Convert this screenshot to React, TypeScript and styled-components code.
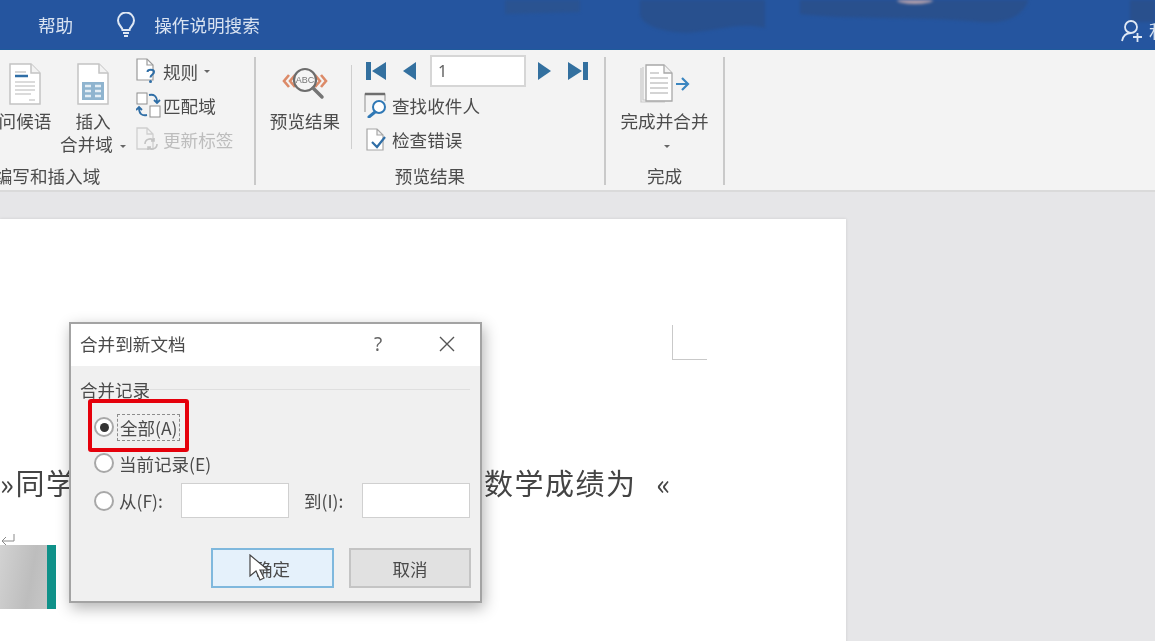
import React from 'react';
import styled, { createGlobalStyle } from 'styled-components';

const GlobalStyle = createGlobalStyle`
    html, body {
        margin: 0;
        padding: 0;
        background: #e6e6e8;
    }
    body {
        font-family: "Noto Sans CJK SC", "Noto Sans", sans-serif;
    }
`;

const Screen = styled.div`
    position: relative;
    width: 1155px;
    height: 641px;
    overflow: hidden;
    display: flex;
    flex-direction: column;
    filter: blur(0.45px);
`;

/* title bar */
const TitleBar = styled.div`
    position: relative;
    flex: none;
    height: 50px;
    box-sizing: border-box;
    padding-left: 38px;
    display: flex;
    align-items: center;
    background: #25559f;
    border-bottom: 1px solid #1f5a9c;
    color: #d9e3f1;
    font-size: 17.6px;
    overflow: hidden;
`;
const TitleArt = styled.svg`
    position: absolute;
    left: 480px;
    top: 0;
    filter: blur(1.5px);
`;
const HelpTab = styled.span`
    position: relative;
    line-height: 24px;
`;
const SearchHint = styled.div`
    position: relative;
    margin-left: 43px;
    display: flex;
    align-items: center;
    gap: 18px;
    line-height: 24px;
`;
const Account = styled.div`
    position: absolute;
    left: 1121px;
    top: 19px;
    display: flex;
    gap: 6px;
    font-size: 18px;
    line-height: 22px;
`;

/* ribbon */
const Ribbon = styled.div`
    flex: none;
    height: 142px;
    box-sizing: border-box;
    padding: 7px 0 5px;
    display: flex;
    background: #f3f3f3;
    border-bottom: 2px solid #dadada;
    color: #4c4c4c;
    font-size: 17.6px;
`;
const Group = styled.div<{ $width: number; $offset?: number }>`
    flex: none;
    box-sizing: border-box;
    width: ${p => p.$width}px;
    margin-left: ${p => p.$offset ?? 0}px;
    display: flex;
    flex-direction: column;
    border-right: 2px solid #c9c9c9;
`;
const GroupBody = styled.div<{ $end?: boolean; $pad?: number }>`
    flex: 1;
    display: flex;
    justify-content: ${p => (p.$end ? 'flex-end' : 'flex-start')};
    padding: 0 ${p => (p.$end ? p.$pad ?? 0 : 0)}px 0 ${p => (p.$end ? 0 : p.$pad ?? 0)}px;
`;
const GroupLabel = styled.div`
    flex: none;
    text-align: center;
    line-height: 18px;
    height: 18px;
`;
const LargeButton = styled.div<{ $width: number }>`
    flex: none;
    box-sizing: border-box;
    width: ${p => p.$width}px;
    padding-top: 6px;
    display: flex;
    flex-direction: column;
    align-items: center;
    text-align: center;
`;
const LargeIconSlot = styled.div`
    height: 42px;
    display: flex;
    align-items: center;
    justify-content: center;
`;
const LargeLabel = styled.div`
    margin-top: 4px;
    line-height: 23px;
    white-space: nowrap;
`;
const Caret = styled.span<{ $gap?: number }>`
    display: inline-block;
    width: 0;
    height: 0;
    margin-left: ${p => p.$gap ?? 5}px;
    vertical-align: middle;
    border-left: 3px solid transparent;
    border-right: 3px solid transparent;
    border-top: 3px solid #666;
`;
const Stack = styled.div<{ $width: number; $left?: number }>`
    flex: none;
    width: ${p => p.$width}px;
    margin-top: -1px;
    margin-left: ${p => p.$left ?? 0}px;
    display: flex;
    flex-direction: column;
    gap: 4px;
`;
const StackRow = styled.div<{ $disabled?: boolean }>`
    height: 30px;
    display: flex;
    align-items: center;
    gap: 1px;
    white-space: nowrap;
    color: ${p => (p.$disabled ? '#bdbdbd' : 'inherit')};
`;
const RowIcon = styled.span<{ $width: number }>`
    flex: none;
    width: ${p => p.$width}px;
    display: flex;
    align-items: center;
`;
const InnerSeparator = styled.div`
    flex: none;
    width: 1px;
    height: 84px;
    margin: 8px 0 0 10px;
    background: #cfcfcf;
`;
const RecordRow = styled.div`
    height: 30px;
    padding-left: 2px;
    display: flex;
    align-items: center;
`;
const NavSpacer = styled.span`
    flex: none;
    width: 16px;
`;
const RecordInput = styled.div`
    box-sizing: border-box;
    width: 96px;
    height: 32px;
    margin: 0 12px 0 14px;
    padding-left: 6px;
    background: #fff;
    border: 2px solid #d6d6d6;
    color: #606060;
    line-height: 28px;
    font-family: "Noto Sans", sans-serif;
    font-size: 16px;
`;

/* document area */
const Workspace = styled.div`
    flex: 1;
    min-height: 0;
    padding-top: 27px;
    background: #e6e6e8;
`;
const Page = styled.div`
    position: relative;
    box-sizing: border-box;
    width: 846px;
    height: 440px;
    padding-top: 106px;
    background: #fff;
    box-shadow: 0 0 3px rgba(0, 0, 0, 0.12);
`;
const CropMark = styled.div`
    box-sizing: border-box;
    width: 35px;
    height: 35px;
    margin-left: 672px;
    border-left: 1px solid #c9c9c9;
    border-bottom: 1px solid #c9c9c9;
`;
const DocLine = styled.div`
    width: 672px;
    margin-top: 102px;
    display: flex;
    justify-content: space-between;
    color: #444;
    font-size: 29px;
    line-height: 40px;
    letter-spacing: 1.5px;
    white-space: nowrap;
`;
const FieldQuote = styled.span`
    margin-left: 20px;
`;
const DocPicture = styled.div`
    position: relative;
    width: 56px;
    height: 64px;
    margin-top: 43px;
    display: flex;
    justify-content: flex-end;
    background: linear-gradient(100deg, #d2d2d2, #bdbdbd 55%, #cbcbcb);
`;
const PictureEdge = styled.div`
    width: 9px;
    background: #0f9189;
`;
const ReturnMark = styled.svg`
    position: absolute;
    left: 0;
    top: -12px;
`;

/* dialog */
const Dialog = styled.div`
    position: absolute;
    left: 69px;
    top: 103px;
    box-sizing: border-box;
    width: 413px;
    height: 281px;
    display: flex;
    flex-direction: column;
    background: #f0f0f0;
    border: 2px solid #a3a3a3;
    box-shadow: 2px 5px 14px rgba(0, 0, 0, 0.3);
    color: #4a4a4a;
    font-size: 17.5px;
`;
const DialogHeader = styled.div`
    flex: none;
    box-sizing: border-box;
    height: 42px;
    padding: 0 0 2px 9px;
    display: flex;
    align-items: center;
    background: #fff;
    line-height: 24px;
`;
const DialogTitle = styled.div`
    flex: 1;
    font-size: 17.6px;
`;
const HelpMark = styled.span`
    width: 20px;
    margin-right: 51px;
    text-align: center;
    color: #666;
    font-family: "Noto Sans", sans-serif;
    font-size: 19px;
`;
const CloseMark = styled.svg`
    margin-right: 25px;
`;
const DialogBody = styled.div`
    flex: 1;
    padding: 14px 10px 0 9px;
`;
const Legend = styled.div`
    height: 20px;
    margin-bottom: 1px;
    display: flex;
    align-items: center;
    line-height: 20px;
    white-space: nowrap;
    &::after {
        content: '';
        flex: 1;
        height: 1px;
        margin: 0 0 2px 0;
        background: #dfdfdf;
    }
`;
const RadioRow = styled.div<{ $height: number; $top: number }>`
    position: relative;
    height: ${p => p.$height}px;
    margin-top: ${p => p.$top}px;
    padding-left: 14px;
    display: flex;
    align-items: center;
    white-space: nowrap;
`;
const Radio = styled.span<{ $checked?: boolean }>`
    flex: none;
    box-sizing: border-box;
    width: 20px;
    height: 20px;
    margin-right: 5px;
    display: flex;
    align-items: center;
    justify-content: center;
    border: 2px solid #a8a8a8;
    border-radius: 50%;
    background: #fff;
    &::after {
        content: '';
        width: 9px;
        height: 9px;
        border-radius: 50%;
        background: ${p => (p.$checked ? '#333' : 'transparent')};
    }
`;
const FocusLabel = styled.span`
    margin-left: -2px;
    padding: 0 2px;
    line-height: 25px;
    border: 1px dashed #8c8c8c;
`;
const Highlight = styled.div`
    position: absolute;
    left: 8px;
    top: -14px;
    box-sizing: border-box;
    width: 101px;
    height: 53px;
    border: 4px solid #e5000b;
    border-radius: 3px;
`;
const FieldLabel = styled.span<{ $width: number; $left?: number }>`
    flex: none;
    width: ${p => p.$width}px;
    margin-left: ${p => p.$left ?? 0}px;
`;
const FieldInput = styled.div`
    box-sizing: border-box;
    flex: none;
    width: 108px;
    height: 35px;
    background: #fff;
    border: 1px solid #d0d0d0;
`;
const DialogActions = styled.div`
    margin-top: 30px;
    margin-right: -1px;
    display: flex;
    justify-content: flex-end;
    gap: 15px;
`;
const DialogButton = styled.div<{ $primary?: boolean }>`
    box-sizing: border-box;
    width: ${p => (p.$primary ? 123 : 122)}px;
    height: 40px;
    display: flex;
    align-items: center;
    justify-content: center;
    background: ${p => (p.$primary ? '#e5f1fb' : '#e1e1e1')};
    border: 2px solid ${p => (p.$primary ? '#7fb8dd' : '#c4c4c4')};
`;
const Pointer = styled.svg`
    position: absolute;
    left: 249px;
    top: 335px;
`;

/* icons */
const BulbIcon = () => (
    <svg width="20" height="26" viewBox="0 0 20 26" fill="none" stroke="#dfe8f4" strokeWidth="2">
        <path d="M6.5 18c0-3-4.5-4.5-4.5-9.5a8 8 0 0 1 16 0C18 13.5 13.500 15 13.500 18z" />
        <path d="M7 21h6M8 24h4" />
    </svg>
);

const PersonIcon = () => (
    <svg width="22" height="24" viewBox="0 0 22 24" fill="none" stroke="#dfe8f4" strokeWidth="1.800">
        <circle cx="10" cy="8" r="6" />
        <path d="M1 22c1-5 4-8 9-8M12 18h9M16.500 14v9" />
    </svg>
);

const LetterIcon = () => (
    <svg width="32" height="42" viewBox="0 0 32 42">
        <path d="M1 1h21l9 9v31H1z" fill="#fff" stroke="#c4c4c4" strokeWidth="1.500" />
        <path d="M22 1v9h9" fill="#f3f3f3" stroke="#c4c4c4" strokeWidth="1.500" />
        <path d="M6 9h11" stroke="#c8c8c8" strokeWidth="1.500" />
        <path d="M6 13h13" stroke="#2f6ea6" strokeWidth="2.500" />
        <path d="M6 19h20M6 23h20M6 27h20M6 31h16M20 37h6" stroke="#d0d0d0" strokeWidth="1.500" />
    </svg>
);

const MergeFieldIcon = () => (
    <svg width="32" height="42" viewBox="0 0 32 42">
        <path d="M1 1h21l9 9v31H1z" fill="#fff" stroke="#c4c4c4" strokeWidth="1.500" />
        <path d="M22 1v9h9" fill="#f3f3f3" stroke="#c4c4c4" strokeWidth="1.500" />
        <rect x="5" y="19" width="22" height="18" fill="#8fb4cf" />
        <path d="M8 23h6M18 23h6M8 28h6M18 28h6M8 33h6M18 33h6" stroke="#e4eef5" strokeWidth="2.500" />
    </svg>
);

const RulesIcon = () => (
    <svg width="22" height="26" viewBox="0 0 22 26">
        <path d="M1 1h10l6 6v15H1z" fill="#fff" stroke="#9a9a9a" strokeWidth="1.200" />
        <path d="M11 1v6h6" fill="none" stroke="#9a9a9a" strokeWidth="1.200" />
        <path d="M11.500 14c0-3 6.500-3 6.500 0 0 2.500-3.500 2.500-3.500 5.500" fill="none" stroke="#2f6ea6" strokeWidth="2" />
        <circle cx="14.500" cy="23.500" r="1.500" fill="#2f6ea6" />
    </svg>
);

const MatchIcon = () => (
    <svg width="25" height="26" viewBox="0 0 25 26">
        <rect x="1" y="1" width="10" height="11" fill="#fff" stroke="#8e8e8e" />
        <rect x="14" y="14" width="10" height="11" fill="#fff" stroke="#8e8e8e" />
        <path d="M13 3c5-1 8 1 8 7M18 8l3 3 3-3" fill="none" stroke="#2f6ea6" strokeWidth="1.800" />
        <path d="M11 23c-5 1-8-1-8-7M0 18l3-3 3 3" fill="none" stroke="#2f6ea6" strokeWidth="1.800" />
    </svg>
);

const UpdateIcon = () => (
    <svg width="23" height="24" viewBox="0 0 23 24" fill="none" stroke="#cfcfcf" strokeWidth="1.300">
        <path d="M1 1h10l6 6v15H1zM11 1v6h6" />
        <path d="M9 17a5 5 0 0 1 9-3M21 17a5 5 0 0 1-9 3M18 11v3h-3M12 23v-3h3" strokeWidth="1.600" stroke="#c3c3c3" />
    </svg>
);

const PreviewIcon = () => (
    <svg width="46" height="36" viewBox="0 0 46 36">
        <path d="M7 9l-5 6 5 6M13 9l-5 6 5 6M33 9l5 6-5 6M39 9l5 6-5 6" fill="none" stroke="#dc8a68" strokeWidth="2.600" />
        <circle cx="23" cy="14" r="11" fill="#f5f5f5" stroke="#6d6d6d" strokeWidth="2.200" />
        <path d="M31 22l9 9" stroke="#757575" strokeWidth="3.500" strokeLinecap="round" />
        <text x="23" y="17" textAnchor="middle" fontFamily="Liberation Sans, sans-serif" fontSize="9" fill="#777">
            ABC
        </text>
    </svg>
);

const NavIcon: React.FC<{ kind: 'first' | 'prev' | 'next' | 'last' }> = ({ kind }) => {
    const shapes = {
        first: { width: 20, d: 'M0 0h5v18H0zM20 0v18L6 9z' },
        prev: { width: 14, d: 'M14 0v18L1 9z' },
        next: { width: 14, d: 'M0 0v18l13-9z' },
        last: { width: 20, d: 'M0 0v18l14-9zM15 0h5v18h-5z' },
    };
    const shape = shapes[kind];
    return (
        <svg width={shape.width} height="18" viewBox={`0 0 ${shape.width} 18`}>
            <path d={shape.d} fill="#33709f" />
        </svg>
    );
};

const FindIcon = () => (
    <svg width="26" height="26" viewBox="0 0 26 26">
        <path d="M1 20V2h20v7" fill="none" stroke="#a0a0a0" strokeWidth="1.200" />
        <path d="M1 2h20" stroke="#6e6e6e" strokeWidth="2.500" />
        <circle cx="15" cy="15" r="6" fill="#fff" stroke="#2f78b5" strokeWidth="2" />
        <path d="M11 20l-6 5" stroke="#2f78b5" strokeWidth="3" strokeLinecap="round" />
    </svg>
);

const CheckIcon = () => (
    <svg width="24" height="26" viewBox="0 0 24 26">
        <path d="M3 3h10l6 6v15H3zM13 3v6h6" fill="#fff" stroke="#a6a6a6" strokeWidth="1.200" />
        <path d="M8 16l5 5 8-10" fill="none" stroke="#2f6ea6" strokeWidth="2.200" />
    </svg>
);

const FinishIcon = () => (
    <svg width="50" height="40" viewBox="0 0 50 40">
        <path d="M1 4v34h24" fill="none" stroke="#c9c9c9" strokeWidth="1.200" />
        <path d="M3 3v33h24" fill="#f7f7f7" stroke="#c9c9c9" strokeWidth="1.200" />
        <path d="M6 1h18l8 8v28H6z" fill="#fff" stroke="#a8a8a8" strokeWidth="1.300" />
        <path d="M24 1v8h8" fill="#f3f3f3" stroke="#a8a8a8" strokeWidth="1.300" />
        <path d="M10 9h9M10 14h18M10 19h18M10 24h18M10 29h18" stroke="#c6c6c6" strokeWidth="1.300" />
        <path d="M36 20h12M42 14l6 6-6 6" fill="none" stroke="#3b86c0" strokeWidth="2.200" />
    </svg>
);

const App: React.FC = () => (
    <>
        <GlobalStyle />
        <Screen>
            <TitleBar>
                <TitleArt width="675" height="40" viewBox="0 0 675 40">
                    <path d="M25 -5h75v17l-75 2z" fill="#2a5391" />
                    <path d="M160 -5h125v33c-30-8-60 8-90 4-20-2-35-10-35-18z" fill="#28508e" />
                    <path d="M320 -5h230c-5 20-20 29-50 27-60-6-130-2-180-8z" fill="#29508d" />
                    <ellipse cx="435" cy="0" rx="18" ry="4" fill="#b9a3ac" />
                    <path d="M650 -5h30v27h-30z" fill="#29508d" />
                </TitleArt>
                <HelpTab>帮助</HelpTab>
                <SearchHint>
                    <BulbIcon />
                    操作说明搜索
                </SearchHint>
                <Account>
                    <PersonIcon />
                    <span>利</span>
                </Account>
            </TitleBar>
            <Ribbon>
                <Group $width={415} $offset={-159}>
                    <GroupBody $end $pad={18}>
                        <LargeButton $width={60}>
                            <LargeIconSlot>
                                <LetterIcon />
                            </LargeIconSlot>
                            <LargeLabel>问候语</LargeLabel>
                        </LargeButton>
                        <LargeButton $width={76}>
                            <LargeIconSlot>
                                <MergeFieldIcon />
                            </LargeIconSlot>
                            <LargeLabel>
                                插入
                                <br />
                                合并域
                                <Caret $gap={7} />
                            </LargeLabel>
                        </LargeButton>
                        <Stack $width={100} $left={5}>
                            <StackRow>
                                <RowIcon $width={26}>
                                    <RulesIcon />
                                </RowIcon>
                                规则
                                <Caret />
                            </StackRow>
                            <StackRow>
                                <RowIcon $width={26}>
                                    <MatchIcon />
                                </RowIcon>
                                匹配域
                            </StackRow>
                            <StackRow $disabled>
                                <RowIcon $width={26}>
                                    <UpdateIcon />
                                </RowIcon>
                                更新标签
                            </StackRow>
                        </Stack>
                    </GroupBody>
                    <GroupLabel>编写和插入域</GroupLabel>
                </Group>
                <Group $width={350}>
                    <GroupBody $pad={13}>
                        <LargeButton $width={72}>
                            <LargeIconSlot>
                                <PreviewIcon />
                            </LargeIconSlot>
                            <LargeLabel>预览结果</LargeLabel>
                        </LargeButton>
                        <InnerSeparator />
                        <Stack $width={230} $left={12}>
                            <RecordRow>
                                <NavIcon kind="first" />
                                <NavSpacer />
                                <NavIcon kind="prev" />
                                <RecordInput>1</RecordInput>
                                <NavIcon kind="next" />
                                <NavSpacer />
                                <NavIcon kind="last" />
                            </RecordRow>
                            <StackRow>
                                <RowIcon $width={27}>
                                    <FindIcon />
                                </RowIcon>
                                查找收件人
                            </StackRow>
                            <StackRow>
                                <RowIcon $width={27}>
                                    <CheckIcon />
                                </RowIcon>
                                检查错误
                            </StackRow>
                        </Stack>
                    </GroupBody>
                    <GroupLabel>预览结果</GroupLabel>
                </Group>
                <Group $width={119}>
                    <GroupBody>
                        <LargeButton $width={117}>
                            <LargeIconSlot>
                                <FinishIcon />
                            </LargeIconSlot>
                            <LargeLabel>
                                完成并合并
                                <br />
                                <Caret />
                            </LargeLabel>
                        </LargeButton>
                    </GroupBody>
                    <GroupLabel>完成</GroupLabel>
                </Group>
            </Ribbon>
            <Workspace>
                <Page>
                    <CropMark />
                    <DocLine>
                        <span>»同学</span>
                        <span>
                            数学成绩为
                            <FieldQuote>«</FieldQuote>
                        </span>
                    </DocLine>
                    <DocPicture>
                        <ReturnMark width="16" height="14" viewBox="0 0 16 14" fill="none" stroke="#8a8a8a">
                            <path d="M14 1v7H2M6 4L2 8l4 4" />
                        </ReturnMark>
                        <PictureEdge />
                    </DocPicture>
                    <Dialog>
                        <DialogHeader>
                            <DialogTitle>合并到新文档</DialogTitle>
                            <HelpMark>?</HelpMark>
                            <CloseMark width="16" height="16" viewBox="0 0 16 16" stroke="#555" strokeWidth="1.400">
                                <path d="M1 1l14 14M15 1L1 15" />
                            </CloseMark>
                        </DialogHeader>
                        <DialogBody>
                            <Legend>合并记录</Legend>
                            <RadioRow $height={28} $top={13}>
                                <Radio $checked />
                                <FocusLabel>全部(A)</FocusLabel>
                                <Highlight />
                            </RadioRow>
                            <RadioRow $height={28} $top={8}>
                                <Radio />
                                当前记录(E)
                            </RadioRow>
                            <RadioRow $height={35} $top={6}>
                                <Radio />
                                <FieldLabel $width={62}>从(F):</FieldLabel>
                                <FieldInput />
                                <FieldLabel $width={58} $left={15}>
                                    到(I):
                                </FieldLabel>
                                <FieldInput />
                            </RadioRow>
                            <DialogActions>
                                <DialogButton $primary>确定</DialogButton>
                                <DialogButton>取消</DialogButton>
                            </DialogActions>
                        </DialogBody>
                    </Dialog>
                    <Pointer width="24" height="28" viewBox="0 0 24 28">
                        <path d="M1 1v21l6-5 4 9 4-2-4-8h8z" fill="#fff" stroke="#444" strokeWidth="1.200" />
                    </Pointer>
                </Page>
            </Workspace>
        </Screen>
    </>
);

export default App;
